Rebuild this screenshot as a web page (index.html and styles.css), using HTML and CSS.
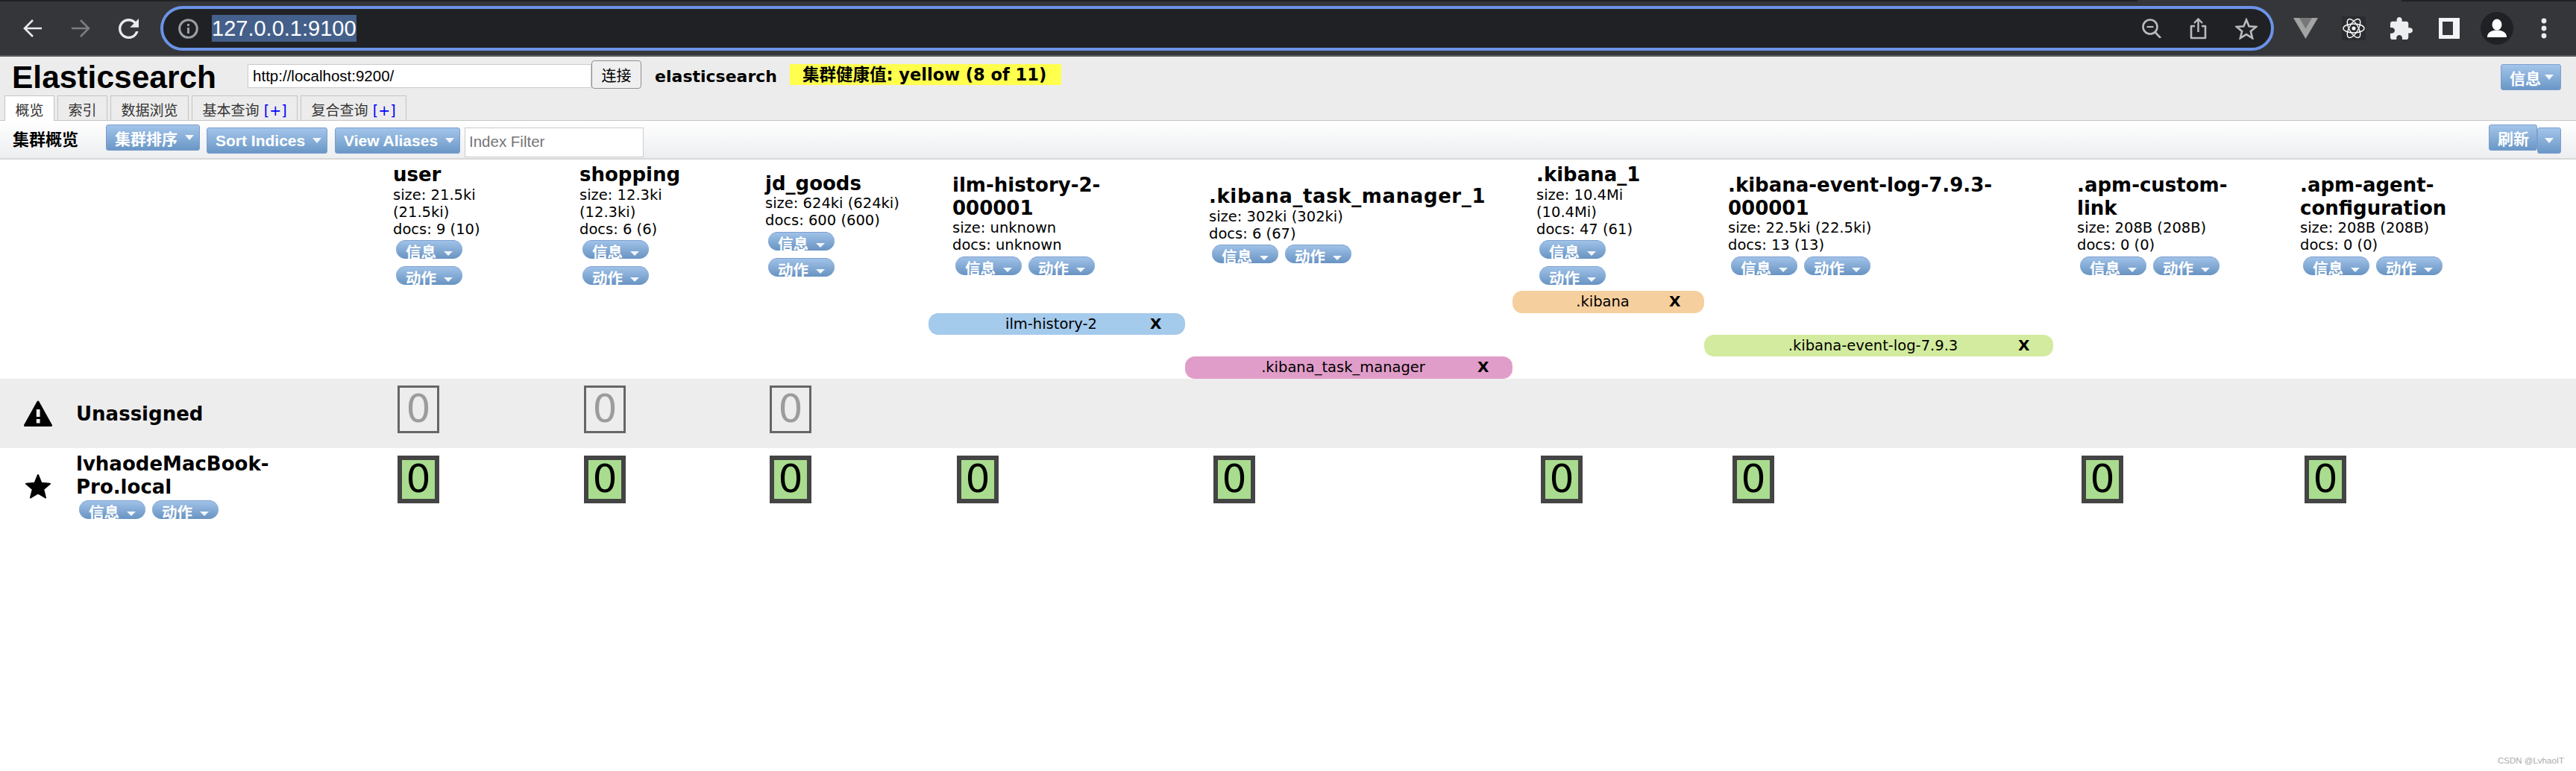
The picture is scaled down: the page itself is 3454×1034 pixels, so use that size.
FILE: index.html
```html
<!DOCTYPE html>
<html lang="en">
<head>
    <meta charset="UTF-8">
    <title>elasticsearch-head</title>
    <link rel="stylesheet" href="styles.css">
</head>
<body>

<div class="browser">
    <div class="browser-top"><span class="top-a"></span><span class="top-b"></span><span class="top-c"></span></div>
    <div class="browser-bar">
        <svg class="nav-icon" width="26" height="26" viewBox="0 0 26 26"><path d="M25 13H2M13 2 2 13l11 11" fill="none" stroke="#e8eaed" stroke-width="2.6"/></svg>
        <svg class="nav-icon" width="26" height="26" viewBox="0 0 26 26"><path d="M1 13h23M13 2l11 11-11 11" fill="none" stroke="#7b7d81" stroke-width="2.6"/></svg>
        <svg class="nav-icon" width="27" height="27" viewBox="4 4 16 16"><path fill="#e8eaed" d="M17.65 6.35A7.958 7.958 0 0 0 12 4c-4.42 0-7.99 3.58-7.99 8s3.57 8 7.99 8c3.73 0 6.84-2.55 7.73-6h-2.08A5.99 5.99 0 0 1 12 18c-3.31 0-6-2.69-6-6s2.69-6 6-6c1.66 0 3.14.69 4.22 1.78L13 11h7V4l-2.35 2.35z"/></svg>
        <div class="address">
            <svg width="27" height="27" viewBox="0 0 27 27"><circle cx="13.5" cy="13.5" r="11.8" fill="none" stroke="#9aa0a6" stroke-width="3"/><rect x="12" y="12" width="3" height="8" fill="#9aa0a6"/><rect x="12" y="7" width="3" height="3" fill="#9aa0a6"/></svg>
            <span class="url">127.0.0.1:9100</span>
            <div class="address-icons">
                <svg width="26" height="26" viewBox="0 0 26 26"><circle cx="11" cy="11" r="9.5" fill="none" stroke="#b9bbbe" stroke-width="2.6"/><path d="M17.5 18 25 26" stroke="#b9bbbe" stroke-width="2.6"/><path d="M6.5 11h9" stroke="#b9bbbe" stroke-width="2.2"/></svg>
                <svg width="23" height="29" viewBox="0 0 23 29"><path d="M7 11H2v16h19V11h-5" fill="none" stroke="#b9bbbe" stroke-width="2.6" stroke-linejoin="round"/><path d="M11.500 19V2M6 7l5.500-5.500L17 7" fill="none" stroke="#b9bbbe" stroke-width="2.4"/></svg>
                <svg width="30" height="29" viewBox="0 0 30 29"><path d="m15 2.500 3.600 8.700 9.400.7-7.200 6.100 2.300 9.100-8.100-5-8.100 5 2.300-9.100L2 11.900l9.400-.7z" fill="none" stroke="#b9bbbe" stroke-width="2.6"/></svg>
            </div>
        </div>
        <div class="ext-icons">
            <svg class="ext-vue" width="33" height="28" viewBox="0 0 33 28"><path d="M0 0h33L16.500 28z" fill="#a3a3a3"/><path d="M8 0h17l-8.500 14.500z" fill="#777"/></svg>
            <svg class="ext-react" width="32" height="32" viewBox="0 0 32 32"><rect width="32" height="32" fill="#2b2c2f"/><g fill="none" stroke="#fff" stroke-width="1.400"><ellipse cx="16" cy="16" rx="14" ry="6"/><ellipse cx="16" cy="16" rx="14" ry="6" transform="rotate(60 16 16)"/><ellipse cx="16" cy="16" rx="14" ry="6" transform="rotate(120 16 16)"/></g><circle cx="16" cy="16" r="2.500" fill="#fff"/></svg>
            <svg class="ext-puzzle" width="30" height="30" viewBox="2 1 21 21"><path fill="#eceef0" d="M20.500 11H19V7c0-1.100-.9-2-2-2h-4V3.500C13 2.120 11.880 1 10.500 1S8 2.120 8 3.500V5H4c-1.100 0-1.990.9-1.990 2v3.800H3.500c1.490 0 2.700 1.210 2.700 2.700s-1.210 2.700-2.700 2.700H2V20c0 1.100.9 2 2 2h3.800v-1.500c0-1.490 1.210-2.700 2.700-2.700 1.490 0 2.700 1.210 2.700 2.700V22H17c1.100 0 2-.9 2-2v-4h1.500c1.380 0 2.500-1.120 2.500-2.500S21.880 11 20.500 11z"/></svg>
            <svg class="ext-panel" width="28" height="28" viewBox="0 0 28 28"><rect width="28" height="28" fill="#f1f3f4"/><rect x="5" y="5" width="14" height="18" fill="#35363a"/></svg>
            <svg class="ext-avatar" width="44" height="44" viewBox="0 0 44 44"><circle cx="22" cy="22" r="22" fill="#202124"/><ellipse cx="22" cy="17" rx="6.500" ry="7.500" fill="#fff"/><path d="M9 34c0-7 6-9.500 13-9.500S35 27 35 34z" fill="#fff"/></svg>
            <svg class="ext-menu" width="8" height="28" viewBox="0 0 8 28"><circle cx="4" cy="4" r="3.400" fill="#e8eaed"/><circle cx="4" cy="14" r="3.400" fill="#e8eaed"/><circle cx="4" cy="24" r="3.400" fill="#e8eaed"/></svg>
        </div>
    </div>
</div>

<div class="header">
    <div class="header-row">
        <h1 class="logo">Elasticsearch</h1>
        <input class="cluster-url" type="text" value="http://localhost:9200/">
        <button class="connect">连接</button>
        <span class="cluster-name">elasticsearch</span>
        <span class="cluster-health">集群健康值: yellow (8 of 11)</span>
        <a class="btn btn-info"><span>信息</span><i class="caret"></i></a>
    </div>
    <div class="tabs">
        <div class="tab active">概览</div>
        <div class="tab">索引</div>
        <div class="tab">数据浏览</div>
        <div class="tab">基本查询 <b>[+]</b></div>
        <div class="tab">复合查询 <b>[+]</b></div>
    </div>
</div>

<div class="toolbar">
    <span class="toolbar-title">集群概览</span>
    <a class="btn btn-sort"><span>集群排序</span><i class="caret"></i></a>
    <a class="btn btn-low btn-indices"><span>Sort Indices</span><i class="caret"></i></a>
    <a class="btn btn-low btn-aliases"><span>View Aliases</span><i class="caret"></i></a>
    <input class="filter" type="text" placeholder="Index Filter">
    <div class="toolbar-right">
        <a class="btn btn-refresh"><span>刷新</span></a>
        <a class="btn btn-low btn-refresh-menu"><i class="caret"></i></a>
    </div>
</div>

<table class="cluster">
    <colgroup>
        <col class="c0"><col class="c1"><col class="c2"><col class="c3"><col class="c4">
        <col class="c5"><col class="c6"><col class="c7"><col class="c8"><col class="c9">
    </colgroup>
    <tr class="indices">
        <td></td>
        <td>
            <h3>user</h3>
            <p>size: 21.5ki (21.5ki)<br>docs: 9 (10)</p>
            <div class="pills stack"><a class="pill"><span>信息</span><i class="caret"></i></a><a class="pill"><span>动作</span><i class="caret"></i></a></div>
        </td>
        <td>
            <h3>shopping</h3>
            <p>size: 12.3ki (12.3ki)<br>docs: 6 (6)</p>
            <div class="pills stack"><a class="pill"><span>信息</span><i class="caret"></i></a><a class="pill"><span>动作</span><i class="caret"></i></a></div>
        </td>
        <td>
            <h3>jd_goods</h3>
            <p>size: 624ki (624ki)<br>docs: 600 (600)</p>
            <div class="pills stack"><a class="pill"><span>信息</span><i class="caret"></i></a><a class="pill"><span>动作</span><i class="caret"></i></a></div>
        </td>
        <td>
            <h3>ilm-history-2-000001</h3>
            <p>size: unknown<br>docs: unknown</p>
            <div class="pills"><a class="pill"><span>信息</span><i class="caret"></i></a><a class="pill"><span>动作</span><i class="caret"></i></a></div>
        </td>
        <td>
            <h3 class="long">.kibana_task_manager_1</h3>
            <p>size: 302ki (302ki)<br>docs: 6 (67)</p>
            <div class="pills"><a class="pill"><span>信息</span><i class="caret"></i></a><a class="pill"><span>动作</span><i class="caret"></i></a></div>
        </td>
        <td>
            <h3>.kibana_1</h3>
            <p>size: 10.4Mi (10.4Mi)<br>docs: 47 (61)</p>
            <div class="pills stack"><a class="pill"><span>信息</span><i class="caret"></i></a><a class="pill"><span>动作</span><i class="caret"></i></a></div>
        </td>
        <td>
            <h3>.kibana-event-log-7.9.3-000001</h3>
            <p>size: 22.5ki (22.5ki)<br>docs: 13 (13)</p>
            <div class="pills"><a class="pill"><span>信息</span><i class="caret"></i></a><a class="pill"><span>动作</span><i class="caret"></i></a></div>
        </td>
        <td>
            <h3>.apm-custom-link</h3>
            <p>size: 208B (208B)<br>docs: 0 (0)</p>
            <div class="pills"><a class="pill"><span>信息</span><i class="caret"></i></a><a class="pill"><span>动作</span><i class="caret"></i></a></div>
        </td>
        <td>
            <h3>.apm-agent-configuration</h3>
            <p>size: 208B (208B)<br>docs: 0 (0)</p>
            <div class="pills"><a class="pill"><span>信息</span><i class="caret"></i></a><a class="pill"><span>动作</span><i class="caret"></i></a></div>
        </td>
    </tr>
    <tr class="alias-row r30">
        <td colspan="6"></td>
        <td class="alias-cell"><div class="alias orange"><b>X</b>.kibana</div></td>
        <td colspan="3"></td>
    </tr>
    <tr class="alias-row r29">
        <td colspan="4"></td>
        <td class="alias-cell"><div class="alias blue"><b>X</b>ilm-history-2</div></td>
        <td colspan="5"></td>
    </tr>
    <tr class="alias-row r29">
        <td colspan="7"></td>
        <td class="alias-cell"><div class="alias green"><b>X</b>.kibana-event-log-7.9.3</div></td>
        <td colspan="2"></td>
    </tr>
    <tr class="alias-row r30">
        <td colspan="5"></td>
        <td class="alias-cell"><div class="alias pink"><b>X</b>.kibana_task_manager</div></td>
        <td colspan="4"></td>
    </tr>
    <tr class="unassigned">
        <td>
            <div class="node">
                <svg width="38" height="36" viewBox="0 0 38 36"><path d="M19 2 36.500 33.500H1.500z" fill="#000" stroke="#000" stroke-width="3" stroke-linejoin="round"/><rect x="16.800" y="12" width="4.800" height="10" fill="#eee"/><rect x="16.800" y="25" width="4.800" height="5.500" fill="#eee"/></svg>
                <div class="node-name">Unassigned</div>
            </div>
        </td>
        <td><div class="shard">0</div></td>
        <td><div class="shard">0</div></td>
        <td><div class="shard">0</div></td>
        <td colspan="6"></td>
    </tr>
    <tr class="assigned">
        <td>
            <div class="node">
                <svg width="35" height="34" viewBox="0 0 35 34"><path d="m17.500 2 4.500 10.800 11.500.9-8.800 7.500 2.800 11.300-10-6.100-10 6.100 2.800-11.300-8.800-7.500 11.500-.9z" fill="#000" stroke="#000" stroke-width="2" stroke-linejoin="round"/></svg>
                <div>
                    <div class="node-name">lvhaodeMacBook-Pro.local</div>
                    <div class="pills"><a class="pill"><span>信息</span><i class="caret"></i></a><a class="pill"><span>动作</span><i class="caret"></i></a></div>
                </div>
            </div>
        </td>
        <td><div class="shard started">0</div></td>
        <td><div class="shard started">0</div></td>
        <td><div class="shard started">0</div></td>
        <td><div class="shard started">0</div></td>
        <td><div class="shard started">0</div></td>
        <td><div class="shard started">0</div></td>
        <td><div class="shard started">0</div></td>
        <td><div class="shard started">0</div></td>
        <td><div class="shard started">0</div></td>
    </tr>
</table>

<div class="watermark">CSDN @LvhaoIT</div>

</body>
</html>
```

FILE: styles.css
```css
html, body {
    margin: 0;
    padding: 0;
}

body {
    width: 3454px;
    height: 1034px;
    overflow: hidden;
    background-color: white;
    font-family: "DejaVu Sans", "Noto Sans CJK SC", sans-serif;
    color: black;
}

/* browser frame */
.browser {
    height: 76px;
    background-color: #35363a;
    border-bottom: 2px solid #5a5b5e;
    box-sizing: border-box;
}

.browser-top {
    display: flex;
    height: 2px;
}

.top-a {
    width: 2866px;
    background-color: #202124;
}

.top-b {
    width: 354px;
}

.top-c {
    flex: 1;
    background-color: #202124;
}

.browser-bar {
    display: flex;
    align-items: center;
    padding: 6px 0 0 31px;
}

.nav-icon {
    margin-right: 38px;
}

.nav-icon:nth-child(3) {
    margin-right: 29px;
}

.address {
    display: flex;
    align-items: center;
    box-sizing: border-box;
    width: 2834px;
    height: 60px;
    padding: 0 18px 0 20px;
    background-color: #202124;
    border: 4px solid #6b93e6;
    border-radius: 30px;
}

.url {
    margin-left: 18px;
    background-color: #44608a;
    color: white;
    font-family: "Liberation Sans", sans-serif;
    font-size: 29px;
    line-height: 36px;
}

.address-icons {
    display: flex;
    align-items: center;
    gap: 38px;
    margin-left: auto;
}

.ext-icons {
    display: flex;
    align-items: center;
}

.ext-vue {
    margin-left: 26px;
}

.ext-react {
    margin-left: 32px;
}

.ext-puzzle {
    margin-left: 33px;
}

.ext-panel {
    margin-left: 35px;
}

.ext-avatar {
    margin-left: 28px;
}

.ext-menu {
    margin-left: 37px;
}

/* head plugin */
.header {
    height: 86px;
    box-sizing: border-box;
    background-color: #ececec;
    border-bottom: 1px solid #c4c4c4;
}

.header-row {
    display: flex;
    align-items: flex-start;
    height: 52px;
    padding: 0 20px 0 16px;
}

.logo {
    margin: 4px 42px 0 0;
    font-family: "Liberation Sans", sans-serif;
    font-size: 42.500px;
    line-height: 48px;
    font-weight: bold;
}

.cluster-url {
    box-sizing: border-box;
    width: 461px;
    height: 32px;
    margin: 10px 0 0 0;
    padding: 0 6px;
    border: 1px solid #ccc;
    background-color: white;
    font-family: "Liberation Sans", sans-serif;
    font-size: 20.500px;
    color: black;
}

.connect {
    box-sizing: border-box;
    width: 67px;
    height: 38px;
    margin: 5px 18px 0 0;
    padding: 0;
    background-color: #efefef;
    border: 1px solid #8f8f8f;
    border-radius: 4px;
    font-family: "Noto Sans CJK SC", sans-serif;
    font-size: 20px;
    color: black;
}

.cluster-name {
    margin: 12px 17px 0 0;
    font-size: 22px;
    line-height: 30px;
    font-weight: bold;
}

.cluster-health {
    box-sizing: border-box;
    width: 364px;
    height: 28px;
    margin-top: 10px;
    padding-left: 17px;
    background-color: #ffff4d;
    font-size: 22.500px;
    line-height: 28px;
    font-weight: bold;
    white-space: nowrap;
    overflow: hidden;
}

.btn {
    display: inline-flex;
    align-items: center;
    box-sizing: border-box;
    height: 35px;
    padding: 0 10px 0 11px;
    background: linear-gradient(#a3c5ea, #6a97c6);
    border: 1px solid #7c9ed0;
    border-radius: 3px;
    font-family: "Liberation Sans", "Noto Sans CJK SC", sans-serif;
    font-size: 21px;
    font-weight: bold;
    color: white;
    white-space: nowrap;
}

.caret {
    display: inline-block;
    width: 0;
    height: 0;
    margin-left: 10px;
    border-left: 6px solid transparent;
    border-right: 6px solid transparent;
    border-top: 7px solid #f2f6fb;
}

.btn-info {
    width: 81px;
    margin: 10px 0 0 auto;
}

.btn-info .caret {
    margin-left: 5px;
}

.tabs {
    display: flex;
    gap: 4px;
    padding-left: 6px;
}

.tab {
    box-sizing: border-box;
    height: 33px;
    padding: 0 13.500px;
    border: 1px solid #c4c4c4;
    border-bottom: none;
    font-family: "Noto Sans CJK SC", sans-serif;
    font-size: 19px;
    line-height: 35px;
    color: #333;
}

.tab b {
    margin-left: 2px;
    font-family: "DejaVu Sans", sans-serif;
    font-weight: normal;
    color: #00f;
}

.tab.active {
    height: 34px;
    background-color: white;
    position: relative;
}

.toolbar {
    display: flex;
    align-items: flex-start;
    box-sizing: border-box;
    height: 52px;
    padding: 5px 20px 0 17px;
    background: linear-gradient(#fff, #eceef0);
    border-bottom: 2px solid #d8d8d8;
}

.toolbar-title {
    width: 125px;
    font-family: "Noto Sans CJK SC", sans-serif;
    font-size: 22px;
    line-height: 36px;
    font-weight: bold;
}

.btn-low {
    margin-top: 4px;
}

.btn-sort {
    margin-right: 9px;
    width: 126px;
}

.btn-indices {
    margin-right: 10px;
    width: 162px;
}

.btn-aliases {
    margin-right: 6px;
    width: 168px;
}

.filter {
    box-sizing: border-box;
    width: 240px;
    height: 40px;
    margin: 4px 0 0 0;
    padding: 0 5px 3px;
    border: 1px solid #ccc;
    background-color: white;
    font-family: "Liberation Sans", sans-serif;
    font-size: 20.500px;
}

.toolbar-right {
    display: flex;
    align-items: flex-start;
    margin-left: auto;
}

.btn-refresh {
    width: 65px;
}

.btn-refresh-menu {
    width: 32px;
    padding: 0 9px;
}

.btn-refresh-menu .caret {
    margin-left: 0;
}

/* cluster overview */
.cluster {
    table-layout: fixed;
    width: 3454px;
    border-collapse: collapse;
    border-spacing: 0;
}

.cluster td {
    padding: 0;
}

.c0 { width: 495px; }
.c1 { width: 250px; }
.c2 { width: 249px; }
.c3 { width: 251px; }
.c4 { width: 344px; }
.c5 { width: 439px; }
.c6 { width: 257px; }
.c7 { width: 468px; }
.c8 { width: 299px; }
.c9 { width: 402px; }

.indices {
    height: 176px;
}

.indices td {
    padding: 0 32px;
    vertical-align: middle;
}

.indices h3 {
    margin: 0;
    font-size: 26px;
    line-height: 30.600px;
    font-weight: bold;
}

.indices h3.long {
    letter-spacing: 0.600px;
    white-space: nowrap;
}

.indices p {
    margin: 0;
    font-size: 19.500px;
    line-height: 23px;
}

.pills {
    display: flex;
    gap: 9px;
    margin: 3.500px 0 2.500px 4px;
}

.pills.stack {
    flex-direction: column;
    gap: 10px;
}

.pill {
    display: block;
    box-sizing: border-box;
    width: 89px;
    height: 25px;
    padding: 2px 0 0 13px;
    overflow: hidden;
    background: linear-gradient(#a0c2e8, #6893c2);
    border-top: 1px solid #7c9ed0;
    border-radius: 12.500px;
    font-family: "Noto Sans CJK SC", sans-serif;
    font-size: 20.500px;
    line-height: 24px;
    font-weight: bold;
    color: white;
    white-space: nowrap;
}

.pill .caret {
    margin-left: 10px;
    vertical-align: 3px;
    border-top-width: 6px;
}

.alias-row.r30 {
    height: 30px;
}

.alias-row.r29 {
    height: 29px;
}

.alias {
    box-sizing: border-box;
    padding: 0 32px;
    border-radius: 13px;
    font-size: 19.500px;
    line-height: 29px;
    text-align: center;
}

.alias-row.r30 .alias {
    height: 30px;
}

.alias-row.r29 .alias {
    height: 29px;
}

.alias b {
    float: right;
    width: 15px;
    font-size: 20px;
}

.orange { background-color: #f6cf9f; }
.blue { background-color: #a4caec; }
.green { background-color: #d2eb9e; }
.pink { background-color: #e19dc9; }

.unassigned {
    height: 93px;
    background-color: #ededed;
}

.assigned {
    height: 102px;
}

.node {
    display: flex;
    align-items: center;
    padding-left: 32px;
}

.node svg {
    flex: none;
    width: 38px;
    margin-right: 32px;
}

.node-name {
    width: 320px;
    font-size: 26px;
    line-height: 30.600px;
    font-weight: bold;
}

.node .pills {
    margin: 3px 0 0 4px;
}

.shard {
    box-sizing: border-box;
    width: 56px;
    height: 64px;
    margin-left: 38px;
    border: 3px solid #666;
    font-size: 52px;
    line-height: 57px;
    text-align: center;
    color: #9c9c9c;
}

.unassigned td,
.assigned td {
    vertical-align: top;
}

.unassigned td {
    padding-top: 9px;
}

.unassigned td:first-child {
    padding-top: 29px;
}

.assigned td {
    padding-top: 10px;
}

.assigned td:first-child {
    padding-top: 6px;
}

.shard.started {
    border: 6px solid #444;
    background-color: #a9dc8f;
    line-height: 50px;
    color: black;
}

.watermark {
    position: absolute;
    right: 16px;
    bottom: 8px;
    font-family: "Liberation Sans", sans-serif;
    font-size: 11.500px;
    color: #aaa;
}
```
